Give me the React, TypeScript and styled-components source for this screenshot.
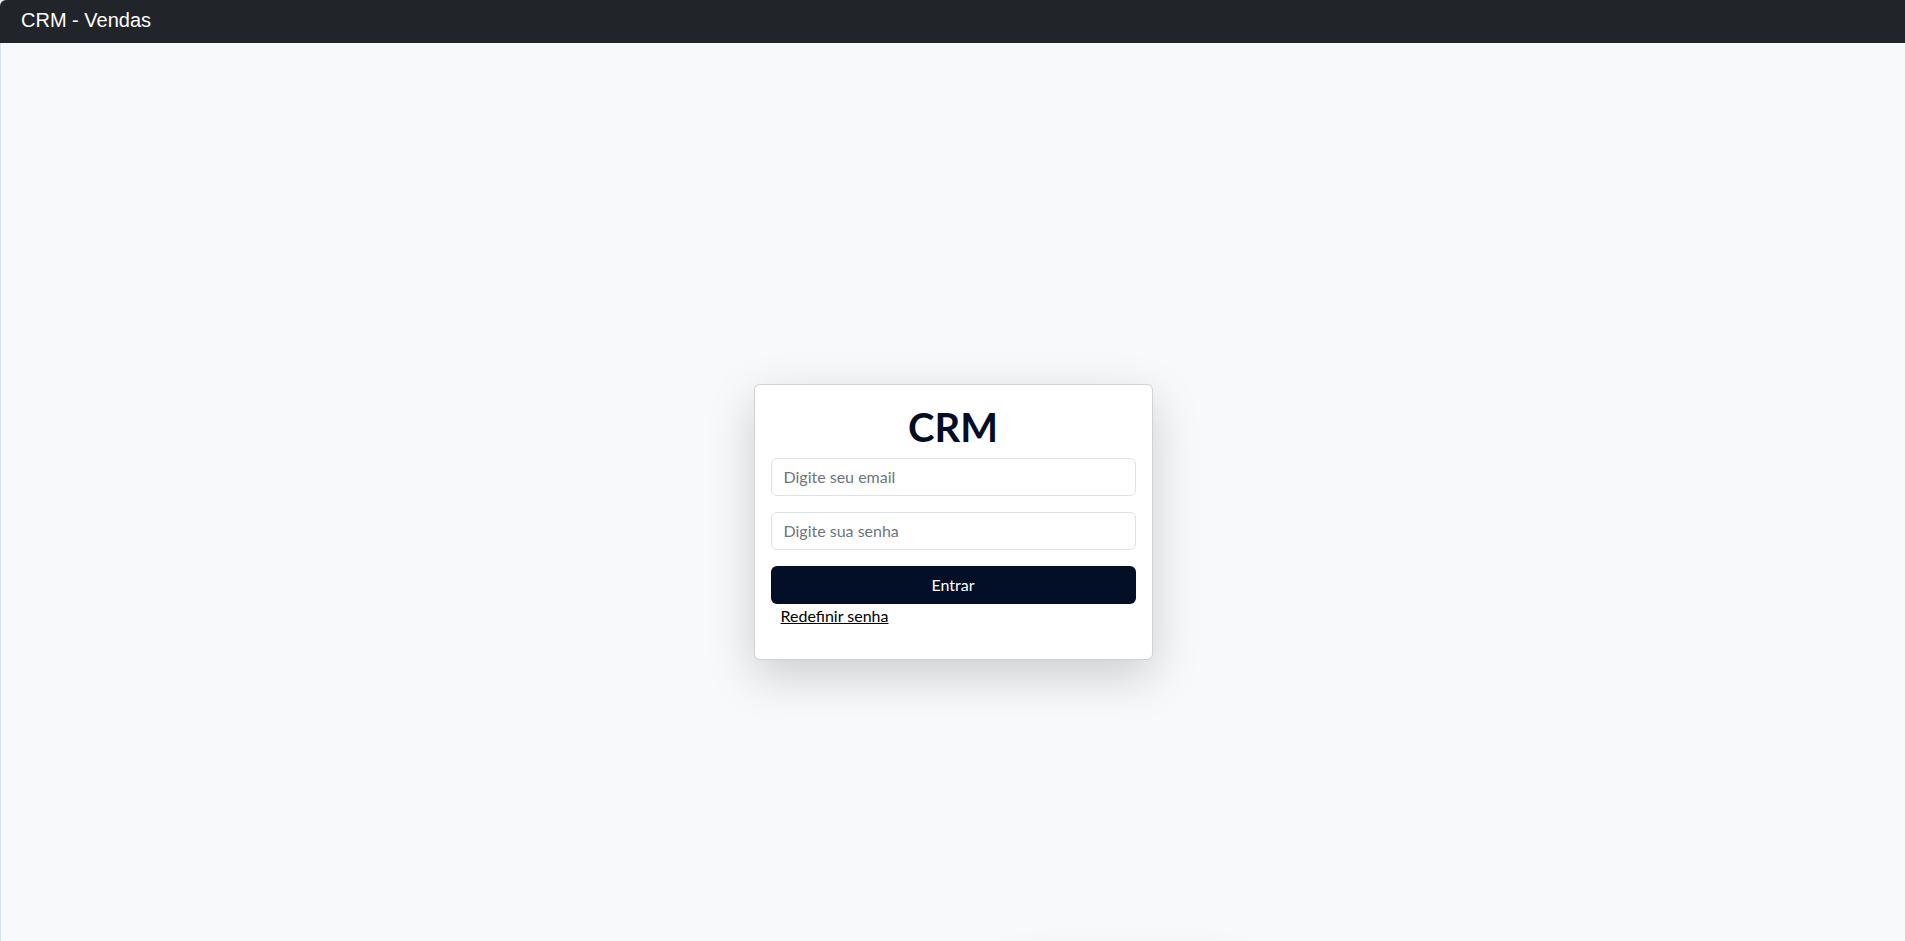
import styled, {createGlobalStyle} from 'styled-components';

const GlobalStyle = createGlobalStyle`
   * {
      box-sizing: border-box;
   }
   body {
      margin: 0;
      background: #f8f9fa;
      font-family: Lato, 'Noto Sans', sans-serif;
      color: #212529;
      overflow: hidden;
   }
`;

export default function App() {
   return (
      <>
         <GlobalStyle />
         <Navbar>
            <Brand>CRM - Vendas</Brand>
         </Navbar>
         <Main>
            <Card>
               <Title>CRM</Title>
               <Form onSubmit={(e) => e.preventDefault()}>
                  <Input type='email' placeholder='Digite seu email' />
                  <Input type='password' placeholder='Digite sua senha' />
                  <Button type='submit'>Entrar</Button>
               </Form>
               <ResetLink href='#'>Redefinir senha</ResetLink>
            </Card>
         </Main>
         {/* element below the fold, only its shadow shows */}
         <Below>
            <Peek />
         </Below>
      </>
   );
}

const Navbar = styled.header`
   height: 43px;
   padding: 5px 21px 8px;
   background: #212529;
   border-top-left-radius: 6px;
`;

const Brand = styled.span`
   display: block;
   font-family: 'Liberation Sans', Arial, sans-serif;
   font-size: 20px;
   line-height: 30px;
   color: #fff;
`;

const Main = styled.main`
   height: 917px;
   padding-top: 40px;
   display: flex;
   align-items: center;
   justify-content: center;
   border-left: 1px solid #d5e3ec;
`;

const Card = styled.div`
   width: 399px;
   padding: 16px 16px 31px;
   background: #fff;
   border: 1px solid rgba(0, 0, 0, 0.175);
   border-radius: 6px;
   box-shadow: 0 1rem 3rem rgba(0, 0, 0, 0.175);
`;

const Title = styled.h1`
   margin: 0 0 5px;
   text-align: center;
   font-size: 40px;
   line-height: 52px;
   font-weight: 700;
   color: #030d24;
`;

const Form = styled.form`
   display: flex;
   flex-direction: column;
   gap: 16px;
`;

const Input = styled.input`
   height: 38px;
   padding: 6px 12px;
   font-family: inherit;
   font-size: 16px;
   line-height: 24px;
   border: 1px solid #dee2e6;
   border-radius: 6px;
   outline: none;
   &::placeholder {
      color: #6c757d;
   }
`;

const Button = styled.button`
   height: 38px;
   border: 0;
   border-radius: 6px;
   background: #030f27;
   color: #fff;
   font-family: inherit;
   font-size: 16px;
   cursor: pointer;
`;

const ResetLink = styled.a`
   display: inline-block;
   margin-left: 10px;
   font-size: 16px;
   line-height: 24px;
   color: #000;
   text-decoration: underline;
`;

const Below = styled.div`
   padding-left: 1012px;
`;

const Peek = styled.div`
   width: 226px;
   height: 60px;
   background: #fff;
   border-radius: 6px;
   box-shadow: 0 1rem 3rem rgba(0, 0, 0, 0.175);
`;
